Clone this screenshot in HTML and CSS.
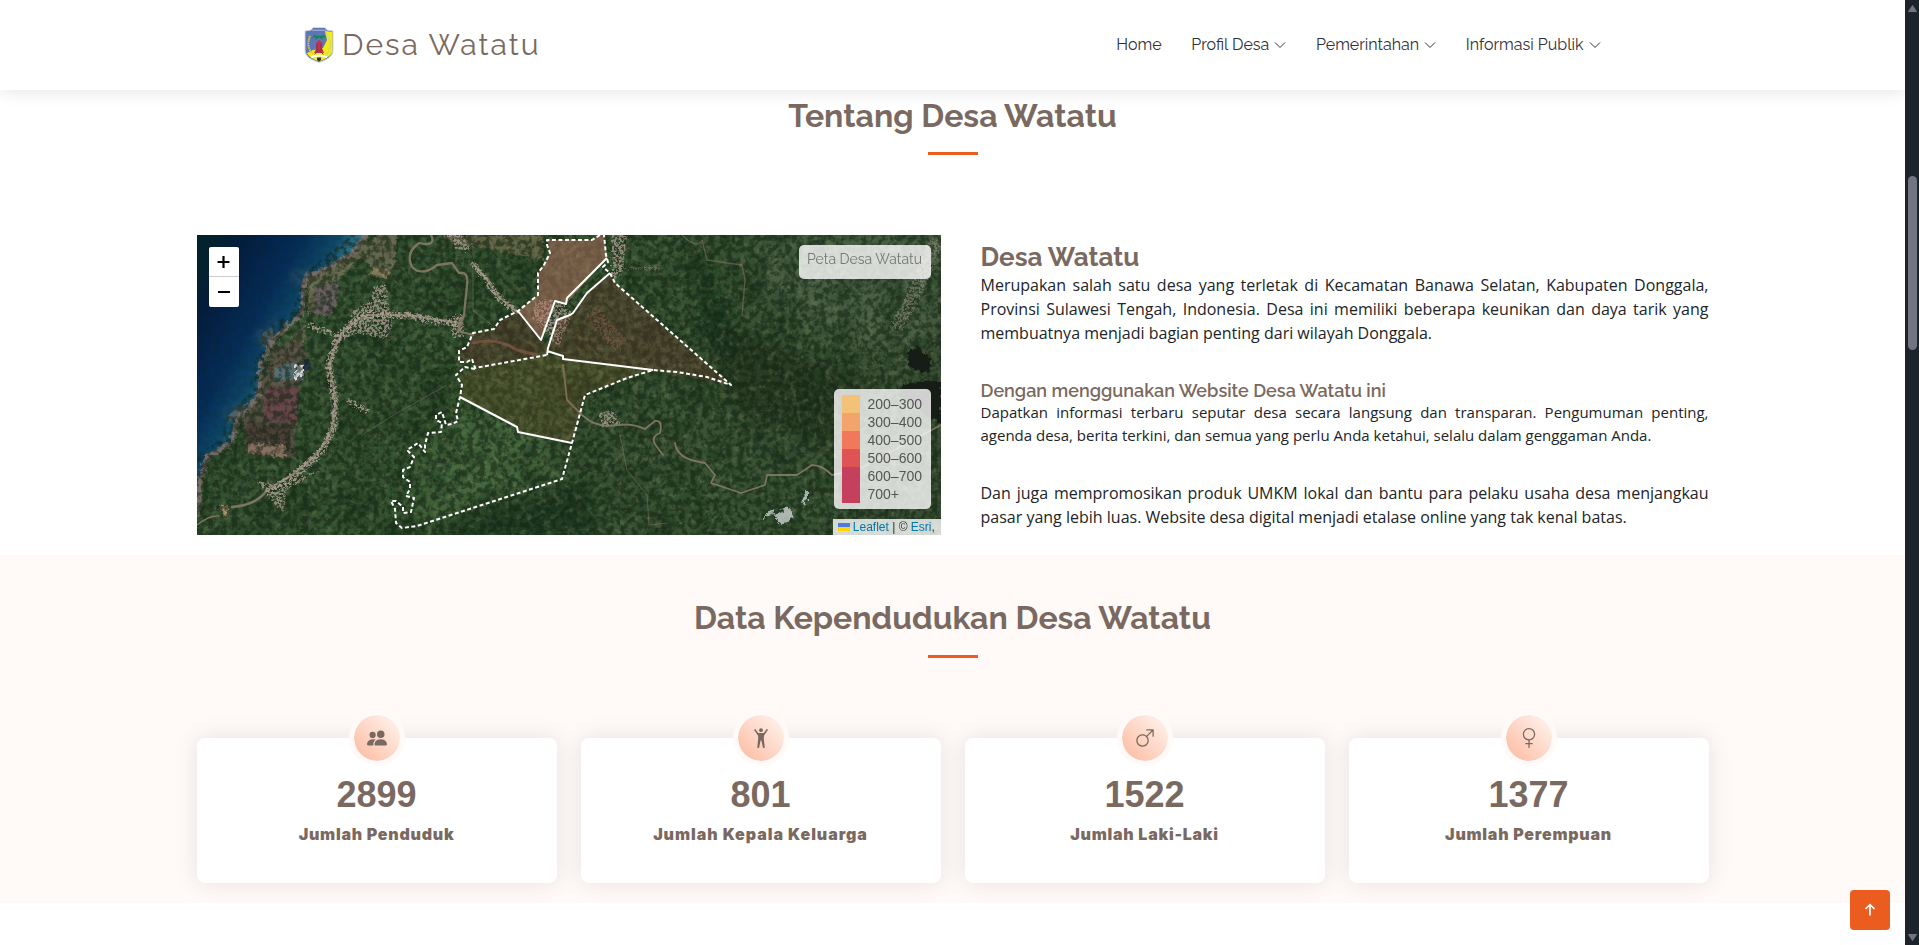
FILE: index.html
```html
<!DOCTYPE html>
<html lang="id">
<head>
<meta charset="utf-8">
<title>Desa Watatu</title>
<link rel="stylesheet" href="styles.css">
</head>
<body>
<div class="page">
  <header class="header">
    <a class="logo">
      <svg class="logo-img" viewBox="0 0 30 38">
        <path d="M1 5 L7 4 L9 1.500 H21 L23 4 L29 5 V24 C29 31 22 34 15 36.500 C8 34 1 31 1 24Z" fill="#5d77b5" stroke="#d4d9e2"/>
        <path d="M21 5 L28.500 6 V24 C28.500 30 21 33 15 35.500 C9 33 5 31 3 27 L9 24 L19 22 L23 14Z" fill="#f4ec18"/>
        <path d="M8 3.500h14v1.500h-14z" fill="#93a5cf"/>
        <path d="M6 10 C3 17 4 23 9 28" fill="none" stroke="#d9c93c" stroke-width="2" stroke-dasharray="1.5 .8"/>
        <path d="M22 8 C28 14 28 24 21 30" fill="none" stroke="#c5d38c" stroke-width="1.800" stroke-dasharray="1.5 1"/>
        <path d="M15 10 L10 9 L8 12 L12 11 L11 14 L15 11.500 L19 14 L18 11 L22 12 L20 9Z" fill="#15835a"/>
        <path d="M12 17 L15 14 L18.500 17 L18 22 L20 27 H10 L12.500 22Z" fill="#c8304e"/>
        <path d="M10.500 28.500 L15 24 L19.500 28.500M13 18v7M17 18v7" stroke="#7c3048" stroke-width=".8" fill="none"/>
        <path d="M7 30 Q15 27 23 30 V32 Q15 29 7 32Z" fill="#fff"/>
        <path d="M13 31.500 h4 v2.500 l-2 1.500 -2-1.500z" fill="#303020"/>
      </svg>
      <span class="logo-text">Desa Watatu</span>
    </a>
    <nav class="nav">
      <a>Home</a>
      <a><span>Profil Desa</span><svg viewBox="0 0 12 12"><path d="M1 3.5 L6 8.5 L11 3.5"/></svg></a>
      <a><span>Pemerintahan</span><svg viewBox="0 0 12 12"><path d="M1 3.5 L6 8.5 L11 3.5"/></svg></a>
      <a><span>Informasi Publik</span><svg viewBox="0 0 12 12"><path d="M1 3.5 L6 8.5 L11 3.5"/></svg></a>
    </nav>
  </header>

  <section class="about">
    <h2 class="title"><span>Tentang Desa Watatu</span></h2>
    <div class="about-row">
      <div class="map">
        <svg class="terrain" viewBox="0 0 744 300">
          <defs>
            <linearGradient id="sea" gradientUnits="userSpaceOnUse" x1="-10" y1="54" x2="96" y2="116">
              <stop offset="0" stop-color="#03222f"/><stop offset=".2" stop-color="#031d40"/><stop offset=".6" stop-color="#052d59"/><stop offset=".85" stop-color="#0e4868"/><stop offset="1" stop-color="#2f7080"/>
            </linearGradient>
            <linearGradient id="land" x1="0" y1="0" x2="1" y2="0.3">
              <stop offset="0" stop-color="#345235"/><stop offset=".5" stop-color="#34532f"/><stop offset="1" stop-color="#3c5237"/>
            </linearGradient>
            <filter id="grain" x="0" y="0" width="100%" height="100%" color-interpolation-filters="sRGB">
              <feTurbulence type="fractalNoise" baseFrequency="0.17" numOctaves="5" seed="4"/>
              <feColorMatrix values="0 0 0 0 0.07  0 0 0 0 0.13  0 0 0 0 0.07  4.5 0 0 0 -1.8"/>
            </filter>
            <filter id="flecks" x="0" y="0" width="100%" height="100%" color-interpolation-filters="sRGB">
              <feTurbulence type="fractalNoise" baseFrequency="0.14" numOctaves="5" seed="21"/>
              <feColorMatrix values="0 0 0 0 0.48  0 0 0 0 0.5  0 0 0 0 0.36  0 5 0 0 -2.6"/>
            </filter>
            <filter id="patches" x="0" y="0" width="100%" height="100%" color-interpolation-filters="sRGB">
              <feTurbulence type="fractalNoise" baseFrequency="0.035" numOctaves="5" seed="11"/>
              <feColorMatrix values="0 0 0 0 0.12  0 0 0 0 0.22  0 0 0 0 0.12  0 3.5 0 0 -1.5"/>
            </filter>
            <filter id="soft" x="-30%" y="-30%" width="160%" height="160%"><feGaussianBlur stdDeviation="7"/></filter>
            <filter id="soft2"><feGaussianBlur stdDeviation="2.5"/></filter>
            <filter id="rough" x="-5%" y="-5%" width="110%" height="110%"><feTurbulence type="fractalNoise" baseFrequency=".25" numOctaves="2" seed="2"/><feDisplacementMap in="SourceGraphic" scale="8" xChannelSelector="R" yChannelSelector="G"/></filter>
            <filter id="scatter" x="-10%" y="-10%" width="120%" height="120%"><feTurbulence type="fractalNoise" baseFrequency=".4" numOctaves="3" seed="8" result="n"/><feColorMatrix in="n" values="0 0 0 0 0 0 0 0 0 0 0 0 0 0 0 7 0 0 0 -3" result="m"/><feDisplacementMap in="SourceGraphic" in2="n" scale="6" xChannelSelector="R" yChannelSelector="G"/><feComposite in2="m" operator="in"/></filter>
            <clipPath id="seaClip"><path d="M0 0H170L156 17L140 28L108 45L105 78L76 105L65 128L61 162L40 185L35 208L10 222L3 245L0 282Z"/></clipPath>
          </defs>
          <rect width="744" height="300" fill="url(#land)"/>
          <g filter="url(#soft)">
            <path d="M560 0H744V110L640 110L570 60Z" fill="#4d6149" opacity=".8"/>
            <path d="M500 80L580 110L680 150L640 210L540 180Z" fill="#253a20" opacity=".8"/>
            <path d="M500 20L520 50L545 130L505 100Z" fill="#1b3620" opacity=".9"/>
            <path d="M265 165L370 205L360 245L225 285L215 240Z" fill="#4c7043" opacity=".7"/>
            <path d="M250 295L390 245L400 300H250Z" fill="#1c371e" opacity=".8"/>
            <path d="M440 270L540 210L640 230V300H440Z" fill="#385433" opacity=".7"/>
          </g>
          <rect width="744" height="300" filter="url(#patches)" opacity=".55"/>
          <rect width="744" height="300" filter="url(#flecks)" opacity=".3"/>
          <g filter="url(#rough)">
            <path d="M178 0H200L198 30L185 42L165 22L140 45L130 60L104 90L96 105L80 125L70 150L95 150L108 100L112 45L145 28Z" fill="#84785f" opacity=".6"/>
            <path d="M76 112L102 104L112 120L100 170L98 222L50 220L46 186L62 160Z" fill="#5d5148" opacity=".75"/>
            <path d="M70 152H100V190L66 184Z" fill="#67474b"/>
            <path d="M50 187L96 192L88 222L50 216Z" fill="#4c3f38"/>
            <path d="M51 208L88 210V222L51 218Z" fill="#86705f"/>
            <path d="M76 134L98 128L106 144L76 146Z" fill="#547073"/>
            <path d="M99 130h8v11h-8zM96 140h6v4h-6z" fill="#d5dada"/>
            <path d="M106 125h8v10h-8z" fill="#26354d"/>
            <path d="M118 52l24-4-2 22-10 12-14-4z" fill="#675f5e"/>
            <path d="M180 32l14 4-4 8-20-4z" fill="#a08a6b" opacity=".7"/>
            <path d="M240 0H346V25L300 16L275 12Z" fill="#8c7759" opacity=".5"/>
            <path d="M22 272l10-2-4 12z" fill="#b89a70"/>
          </g>
          <path d="M0 0H170L156 17L140 28L108 45L105 78L76 105L65 128L61 162L40 185L35 208L10 222L3 245L0 282Z" fill="url(#sea)"/>
          <g clip-path="url(#seaClip)">
            <g fill="#566469" filter="url(#soft2)" opacity=".9"><ellipse cx="104" cy="42" rx="14" ry="9"/><ellipse cx="68" cy="101" rx="11" ry="10"/><ellipse cx="39" cy="178" rx="12" ry="10"/><ellipse cx="76" cy="85" rx="6" ry="3"/></g>
          </g>
          <path d="M170 0L156 17L140 28L108 45L105 78L76 105L65 128L61 162L40 185L35 208L10 222L3 245L0 282" fill="none" stroke="#80716b" stroke-width="5" opacity=".85" filter="url(#rough)"/>
          <rect width="744" height="300" filter="url(#grain)" opacity=".55"/>
          <g filter="url(#scatter)" fill="#a8988f" opacity=".8">
            <path d="M156 76L175 65L178 50H190L192 70L196 90L190 104L160 98L146 105Z"/>
            <path d="M60 246l12 2 18 8-4 22-12-14z"/>
            <path d="M415 0h16l-6 40-10 5z"/>
            <path d="M402 178l14-4 8 16-20 2z"/>
            <path d="M255 80h12v22h-12z"/>
            <path d="M340 65l18 0 18 12-14 36-26-30z"/>
            <path d="M250 0l16 0 8 16-12 0z"/>
            <path d="M125 235l-25 14-28 15 6-14z"/>
          </g>
          <g fill="none" stroke="#867b67" stroke-linejoin="round" stroke-linecap="round" opacity=".9">
            <path d="M234 0Q240 12 222 8Q208 18 215 32Q225 42 240 30L255 28L262 38Q272 36 270 50L267 80L261 96L276 100" stroke-width="2.3"/>
            <path d="M0 290Q12 280 22 281" stroke-width="1.500"/>
            <path d="M35 272Q60 270 70 255L95 240Q125 218 132 200Q142 175 136 150L132 130Q140 100 155 88L170 80L210 80L262 88" stroke-width="2.500"/>
            <path d="M276 108Q300 102 320 115L340 120" stroke="#8a6853" stroke-width="3" opacity=".7"/>
            <path d="M366 130L370 165L385 180Q400 194 420 190Q435 188 448 194L458 186Q466 185 463 198Q452 202 460 212L466 220" stroke-width="1.800"/>
            <path d="M478 208Q480 222 498 226L508 228L518 240L514 248L544 258L568 250L570 240L600 240L615 230Q625 230 635 240L660 235L744 190" stroke-width="1.800"/>
            <path d="M485 0Q500 15 505 5L510 25L545 30L548 45L545 80" stroke-width="1.300" opacity=".6"/>
            <path d="M423 200L430 235L450 260L452 290L470 288" stroke-width="1.200" opacity=".5"/>
            <path d="M276 33V75L295 90M165 200L200 178L250 150" stroke-width="1" opacity=".5"/>
            <path d="M276 28L290 45L300 60L321 78" stroke-width="2"/>
          </g>
          <g fill="none" stroke="#ada096" filter="url(#scatter)" opacity=".85">
            <path d="M276 28L290 45L300 60L321 78" stroke-width="6"/>
            <path d="M70 258L95 243L125 217L138 190L138 160L132 130L140 105L155 88L170 80L210 80L240 86L262 88" stroke-width="7"/>
            <path d="M112 90L135 98L146 102M150 165L165 173L172 176" stroke-width="5"/>
            <path d="M740 5L718 60L700 92" stroke-width="14" opacity=".5"/>
            <path d="M395 75L410 95L425 110" stroke="#93705e" stroke-width="16" opacity=".5"/>
            <path d="M425 33l40 0" stroke-width="3" opacity=".5"/>
          </g>
          <g filter="url(#rough)"><path d="M710 122L718 110L735 126L732 138L714 134ZM735 145H744V190L730 180L700 160L705 150Z" fill="#141c12"/></g>
          <g filter="url(#rough)" fill="#ccd2d1" opacity=".8"><path d="M576 280L592 272L596 282L584 290ZM606 262L611 253V264L605 272ZM562 286l14-12 2 4z"/></g>
          <path d="M0 0H155L108 38L96 75L66 98L58 125L52 158L30 182L23 205L0 220Z" fill="url(#sea)" opacity=".75"/>
          <path d="M407 0L403 0L395 5L350 5L353 18L341 38V60L321 76L344 105L358 66L369 69L410 23Z" fill="#c5796a" opacity=".48"/>
          <path d="M321 76L303 85L297 94L276 98L270 112L262 116V127L275 124L278 133L350 120L351 113L344 105Z" fill="#8c3a35" opacity=".25"/>
          <path d="M351 116L366 123L456 135L534 150L418 48L413 38L390 58L376 78L360 85Z" fill="#8c3a35" opacity=".25"/>
          <path d="M278 134L350 120L366 123L456 135L388 160L375 208L321 197L320 192L263 162L265 150L259 140Z" fill="#8c5a2d" opacity=".24"/>
          <g fill="none" stroke="#fff" stroke-width="2" stroke-linejoin="round">
            <path stroke-dasharray="4 2.5" d="M403 0L395 5L350 5L350 10L353 18L347 30L341 38V60L321 76L303 85L297 94L276 98L270 112L262 116V127L270 127L275 124L278 133L350 120M278 134L268 132L259 140L265 150L263 162L259 178L261 186L255 189L249 190L245 177L239 180L239 185L245 188L244 197L231 198L228 210L228 217L221 208L210 215L217 222L213 232L206 235L206 242L213 247L213 254L209 261L217 263L214 277L206 278L206 272L199 266L194 266L198 274L199 288L205 293L220 291L365 244L375 208L388 160L430 143L456 135L480 137L510 142L534 150L418 48L413 38L406 32L411 27L409 20L407 0"/>
            <path d="M321 76L344 105L358 66L369 69L370 63L410 23M350 120L351 113L360 85L373 80L376 78L390 58L413 38M350 116L366 121L366 124L456 135M263 162L320 192L321 197L375 208"/>
          </g>
        </svg>
        <div class="zoom"><a><svg viewBox="0 0 30 30"><path d="M8.500 15H20.500M14.500 9V21"/></svg></a><a><svg viewBox="0 0 30 30"><path d="M9 15H21"/></svg></a></div>
        <div class="map-info"><span>Peta Desa Watatu</span></div>
        <div class="legend">
          <div><i class="c1"></i>200–300</div><div><i class="c2"></i>300–400</div><div><i class="c3"></i>400–500</div><div><i class="c4"></i>500–600</div><div><i class="c5"></i>600–700</div><div><i class="c5"></i>700+</div>
        </div>
        <div class="attribution"><svg viewBox="0 0 12 8"><path fill="#4c7be1" d="M0 0h12v4H0z"/><path fill="#ffd500" d="M0 4h12v4H0z"/></svg> <a>Leaflet</a> | © <a>Esri</a>,</div>
      </div>
      <div class="copy">
        <h3>Desa Watatu</h3>
        <p>Merupakan salah satu desa yang terletak di Kecamatan Banawa Selatan, Kabupaten Donggala, Provinsi Sulawesi Tengah, Indonesia. Desa ini memiliki beberapa keunikan dan daya tarik yang membuatnya menjadi bagian penting dari wilayah Donggala.</p>
        <h4>Dengan menggunakan Website Desa Watatu ini</h4>
        <p class="small">Dapatkan informasi terbaru seputar desa secara langsung dan transparan. Pengumuman penting, agenda desa, berita terkini, dan semua yang perlu Anda ketahui, selalu dalam genggaman Anda.</p>
        <p class="closing">Dan juga mempromosikan produk UMKM lokal dan bantu para pelaku usaha desa menjangkau pasar yang lebih luas. Website desa digital menjadi etalase online yang tak kenal batas.</p>
      </div>
    </div>
  </section>

  <section class="stats">
    <h2 class="title"><span>Data Kependudukan Desa Watatu</span></h2>
    <div class="cards">
      <div class="card"><div class="icon"><svg viewBox="0 0 16 16"><path d="M7 14s-1 0-1-1 1-4 5-4 5 3 5 4-1 1-1 1zm4-6a3 3 0 1 0 0-6 3 3 0 0 0 0 6m-5.784 6A2.24 2.24 0 0 1 5 13c0-1.355.68-2.75 1.936-3.72A6.3 6.3 0 0 0 5 9c-4 0-5 3-5 4s1 1 1 1zM4.500 8a2.500 2.500 0 1 0 0-5 2.500 2.500 0 0 0 0 5"/></svg></div><strong>2899</strong><span class="label">Jumlah Penduduk</span></div>
      <div class="card"><div class="icon"><svg viewBox="0 0 16 16"><circle cx="8" cy="1.700" r="1.500"/><path d="M5.800 5.200L3.200 1.500" stroke="#7a6960" stroke-width="1.300" stroke-linecap="round"/><path d="M10.200 5.200L12.800 1.500" stroke="#7a6960" stroke-width="1.300" stroke-linecap="round"/><path d="M5.300 4.200L6.500 4H9.500L10.700 4.200L10.200 8L11 15.500Q10.200 16.300 9.500 15.500L8.300 10H7.700L6.500 15.500Q5.800 16.300 5 15.500L5.800 8Z"/></svg></div><strong>801</strong><span class="label wide">Jumlah Kepala Keluarga</span></div>
      <div class="card"><div class="icon"><svg viewBox="0 0 16 16"><path d="M9.500 2a.5.5 0 0 1 0-1h5a.5.5 0 0 1 .5.5v5a.5.5 0 0 1-1 0V2.707L9.871 6.836a5 5 0 1 1-.707-.707L13.293 2zM6 6a4 4 0 1 0 0 8 4 4 0 0 0 0-8"/></svg></div><strong>1522</strong><span class="label">Jumlah Laki-Laki</span></div>
      <div class="card"><div class="icon"><svg viewBox="0 0 16 16"><path d="M8 1a4 4 0 1 0 0 8 4 4 0 0 0 0-8M3 5a5 5 0 1 1 5.500 4.975V12h2a.5.5 0 0 1 0 1h-2v2.500a.5.5 0 0 1-1 0V13h-2a.5.5 0 0 1 0-1h2V9.975A5 5 0 0 1 3 5"/></svg></div><strong>1377</strong><span class="label">Jumlah Perempuan</span></div>
    </div>
  </section>
</div>
<a class="to-top"><svg viewBox="0 0 16 16"><path d="M8 13.500V3M3.500 7L8 2.600L12.500 7"/></svg></a>
<div class="scrollbar"><svg viewBox="0 0 14 10"><path d="M7.500 1.500L11.500 7.500H3.500Z"/></svg><div class="thumb"></div><svg class="down" viewBox="0 0 14 10"><path d="M3.500 2.500H11.500L7.500 8.500Z"/></svg></div>
</body>
</html>
```
FILE: styles.css
```css
* { box-sizing: border-box; }
body { margin: 0; width: 1919px; height: 945px; overflow: hidden; background: #fff; color: #212529; font: 16px/24px "Open Sans", sans-serif; position: relative; }
h2, h3, h4, p { margin: 0; }
.page { width: 1905px; }
.header { position: relative; z-index: 2; height: 90px; padding: 0 304.500px 0 304px; display: flex; align-items: center; justify-content: space-between; background: #fff; box-shadow: 0 0 18px rgba(0,0,0,.12); font-family: Raleway, Lato, sans-serif; }
.logo { display: flex; align-items: center; gap: 8px; }
.logo-img { width: 30px; height: 38px; }
.logo-text { font-size: 30px; line-height: 38px; color: #7a6960; letter-spacing: 2px; white-space: nowrap; }
.nav { display: flex; gap: 29.700px; color: #2f3238; font-weight: 400; white-space: nowrap; }
.nav a { display: flex; align-items: center; gap: 5px; }
.nav svg { width: 12px; height: 12px; fill: none; stroke: #2f3238; stroke-width: 1; }
.about { height: 465px; padding: 4px 196.500px 0; }
.title { display: flex; flex-direction: column; align-items: center; font: 700 32px/44px Raleway, Lato, sans-serif; color: #7a6960; white-space: nowrap; }
.title::after { content: ""; width: 50px; height: 3px; margin-top: 14px; background: #eb5d1e; }
.about-row { display: flex; gap: 40px; margin-top: 80px; }
.map { position: relative; flex: none; width: 744px; height: 300px; overflow: hidden; }
.terrain { display: block; width: 744px; height: 300px; }
.zoom { position: absolute; left: 12px; top: 12px; width: 30px; border-radius: 2px; overflow: hidden; background: #fff; }
.zoom a { display: block; height: 30px; }
.zoom a:first-child { border-bottom: 1px solid #ccc; }
.zoom svg { display: block; width: 30px; height: 30px; stroke: #000; stroke-width: 2.200; }
.map-info { position: absolute; right: 10px; top: 10px; width: 132px; height: 34px; padding: 6px 0 0 8.500px; border-radius: 5px; background: rgba(255,255,255,.8); color: #777; font: 14px/17px Raleway, Lato, sans-serif; white-space: nowrap; }
.legend { position: absolute; right: 10px; top: 154px; width: 97px; height: 120px; padding: 6px 8px; border-radius: 5px; background: rgba(255,255,255,.8); color: #555; font: 14px/18px "Liberation Sans", sans-serif; }
.legend div { display: flex; gap: 8px; height: 18px; }
.legend i { width: 18px; height: 18px; }
.c1 { background: #f3c178; }
.c2 { background: #f3a46c; }
.c3 { background: #f2785c; }
.c4 { background: #e05355; }
.c5 { background: #c4405c; }
.attribution { position: absolute; right: 0; bottom: 0; width: 108px; height: 16px; padding-left: 5px; background: rgba(255,255,255,.8); color: #333; font: 12px/16px "Liberation Sans", sans-serif; white-space: nowrap; }
.attribution svg { width: 12px; height: 8px; }
.attribution a { color: #0078a8; }
.copy { flex: none; width: 728px; padding-top: 7px; text-align: justify; }
.copy h3, .copy h4 { font-family: Raleway, Lato, sans-serif; color: #7a6960; white-space: nowrap; }
.copy h3 { font-size: 26px; line-height: 31px; font-weight: 700; }
.copy h4 { font-size: 18px; line-height: 22px; font-weight: 600; margin-top: 35px; }
.copy .small { font-size: 15px; line-height: 23px; margin-top: -1px; }
.copy .closing { margin-top: 34px; }
.stats { height: 348px; padding: 41px 196.500px 0; background: #fffaf8; }
.stats .title::after { margin-top: 15px; }
.cards { display: grid; grid-template-columns: repeat(4, 360px); gap: 24px; margin-top: 80px; }
.card { position: relative; height: 145px; border-radius: 8px; background: #fff; box-shadow: 0 0 25px rgba(0,0,0,.1); display: flex; flex-direction: column; align-items: center; padding-top: 36px; color: #7a6960; }
.icon { position: absolute; left: 152px; top: -28px; width: 56px; height: 56px; border: 5px solid #fffaf8; border-radius: 50%; background: linear-gradient(45deg, #fdb99e, #fff6f2) padding-box; display: flex; align-items: center; justify-content: center; }
.icon svg { width: 20px; height: 20px; fill: #7a6960; overflow: visible; }
.card strong { font: 700 36px/42px "Liberation Sans", sans-serif; }
.label { font: 900 16px/24px Inter, "Liberation Sans", sans-serif; letter-spacing: .75px; margin-top: 6px; }
.label.wide { letter-spacing: .95px; }
.to-top { position: absolute; left: 1850px; top: 890px; width: 40px; height: 40px; border-radius: 4px; background: #eb5d1e; display: flex; align-items: center; justify-content: center; }
.to-top svg { width: 16px; height: 16px; fill: none; stroke: #fff; stroke-width: 1.700; }
.scrollbar { position: absolute; right: 0; top: 0; width: 14px; height: 945px; background: #1c232b; display: flex; flex-direction: column; align-items: flex-start; padding: 4px 0 3px; z-index: 3; }
.scrollbar svg { width: 14px; height: 10px; fill: #70757f; stroke: #70757f; stroke-linejoin: round; }
.thumb { width: 9px; height: 174px; border-radius: 5px; margin: 162px 0 0 3px; background: #70757f; }
.scrollbar .down { margin-top: auto; }
```
